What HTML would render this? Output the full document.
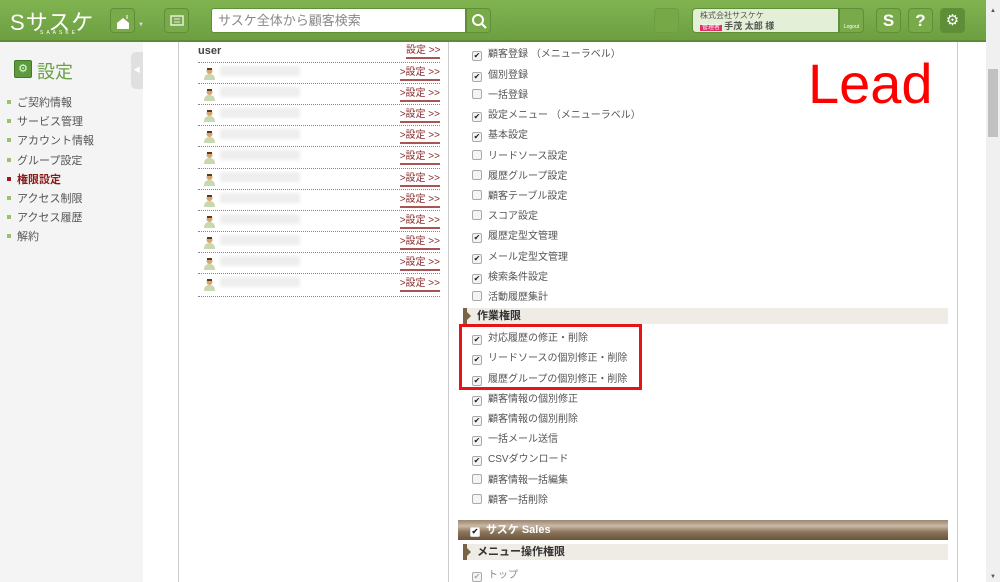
<!DOCTYPE html>
<html><head><meta charset="utf-8"><style>
*{margin:0;padding:0;box-sizing:border-box}
body{width:1000px;height:582px;overflow:hidden;background:#fff;font-family:"Liberation Sans","Noto Sans CJK JP",sans-serif;font-size:11px;color:#444;position:relative}
.hd{position:absolute;left:0;top:0;width:986px;height:42px;background:linear-gradient(#80b350,#6d9f42);border-bottom:2px solid #5e8a38}
.btn{position:absolute;top:8px;width:25px;height:25px;border:1px solid #5f9038;border-radius:4px;background:#78aa49}
.sb{position:absolute;left:0;top:42px;width:143px;height:540px;background:#f4f4f4}
.vl{position:absolute;top:42px;width:1px;height:540px;background:#ccc}
.nav{position:absolute;left:7px;font-size:11px;color:#555}
.nav:before{content:"";display:inline-block;width:4px;height:4px;background:#9bc26a;margin-right:6px;vertical-align:2px}
.nav.act{color:#8a1a1a;font-weight:bold}.nav.act:before{background:#a01818}
.row{position:absolute;left:198px;width:242px;height:21px;border-top:1px dotted #888}
.row .ic{position:absolute;left:6px;top:4px;width:11px;height:13px}
.row .nm{position:absolute;left:22px;top:3px;width:80px;height:10px;background:#eee;filter:blur(1.5px)}
.lk{position:absolute;right:0;color:#8a2a2a;font-size:10px;border-bottom:2px solid #a55;line-height:12px}
.it{position:absolute;left:472px;font-size:10px;color:#555;white-space:nowrap}
.cb{display:inline-block;width:10px;height:10px;border:1px solid #aaa;border-radius:2px;background:#f4f4f4;margin-right:6px;vertical-align:-1px;position:relative;font-size:8px;line-height:8px;text-align:center;color:#222}
.band{position:absolute;left:463px;width:485px;height:16px;background:#efebe5;font-weight:bold;font-size:11px;color:#333;padding-left:14px;line-height:16px}
.band:before{content:"";position:absolute;left:0;top:0;width:4px;height:16px;background:#7a6448}
.band:after{content:"";position:absolute;left:4px;top:4px;border-left:4px solid #7a6448;border-top:4px solid transparent;border-bottom:4px solid transparent}
</style></head><body>
<div class="hd">
 <div style="position:absolute;left:10px;top:5px;color:#fff;font-size:22px;letter-spacing:1px">S<span>サスケ</span></div>
 <div style="position:absolute;left:40px;top:30px;color:#fff;font-size:5px;letter-spacing:3px">SAASKE</div>
 <div class="btn" style="left:110px"><svg width="25" height="25"><path d="M6 14l6-5 6 5v6H6z" fill="#fff"/><path d="M16 6v4" stroke="#fff"/></svg></div>
 <div style="position:absolute;left:138px;top:22px;color:#ddd;font-size:6px">▼</div>
 <div class="btn" style="left:164px"><svg width="25" height="25"><rect x="6" y="7" width="12" height="9" fill="none" stroke="#e8f0dc" stroke-width="1.5"/><path d="M9 10h6M9 13h6" stroke="#e8f0dc"/></svg></div>
 <div style="position:absolute;left:211px;top:8px;width:255px;height:25px;background:#fff;border:1px solid #5f9038;border-radius:3px 0 0 3px;color:#888;font-size:13px;line-height:23px;padding-left:6px">サスケ全体から顧客検索</div>
 <div class="btn" style="left:466px;border-radius:0 4px 4px 0"><svg width="25" height="25"><circle cx="11" cy="11" r="5" fill="none" stroke="#fff" stroke-width="2"/><path d="M15 15l4 4" stroke="#fff" stroke-width="2"/></svg></div>
 <div class="btn" style="left:654px;background:#76a848;border-color:#6d9f42"></div>
 <div style="position:absolute;left:692px;top:8px;width:147px;height:25px;background:#e3efd6;border:1px solid #5f9038;border-radius:4px 0 0 4px;font-size:8px;color:#555;padding:1px 0 0 7px;line-height:11px">株式会社サスケケ<br><span style="background:#e0306a;color:#fff;font-size:6px;padding:0 2px">管理者</span> <b style="font-size:9px">手茂 太郎 様</b></div>
 <div class="btn" style="left:839px;border-radius:0 4px 4px 0;color:#fff;font-size:5px;text-align:center;padding-top:15px">Logout</div>
 <div class="btn" style="left:876px;color:#fff;font-size:17px;font-weight:bold;text-align:center;line-height:24px">S</div>
 <div class="btn" style="left:908px;color:#fff;font-size:17px;font-weight:bold;text-align:center;line-height:24px">?</div>
 <div class="btn" style="left:940px;background:#5f8e38;color:#fff;font-size:15px;text-align:center;line-height:24px">⚙</div>
</div>
<div style="position:absolute;left:986px;top:0;width:14px;height:582px;background:#f0f0f0"></div>
<div style="position:absolute;left:988px;top:69px;width:10px;height:68px;background:#c1c1c1"></div>
<div style="position:absolute;left:990px;top:8px;font-size:6px;color:#555">▲</div>
<div style="position:absolute;left:990px;top:574px;font-size:6px;color:#555">▼</div>
<div class="sb"></div>
<div style="position:absolute;left:131px;top:52px;width:12px;height:37px;background:#e0e0e0;border-radius:5px 0 0 5px;color:#fff;font-size:7px;line-height:37px;text-align:center">◀</div>
<div style="position:absolute;left:14px;top:60px;width:18px;height:18px;background:#5e9a3d;border:1px solid #3f7a2a;border-radius:2px;color:#dfd;font-size:11px;text-align:center;line-height:16px">⚙</div>
<div style="position:absolute;left:37px;top:58px;font-size:18px;color:#6a9f44">設定</div>
<div class="nav" style="top:94px">ご契約情報</div>
<div class="nav" style="top:113px">サービス管理</div>
<div class="nav" style="top:132px">アカウント情報</div>
<div class="nav" style="top:152px">グループ設定</div>
<div class="nav act" style="top:171px">権限設定</div>
<div class="nav" style="top:190px">アクセス制限</div>
<div class="nav" style="top:209px">アクセス履歴</div>
<div class="nav" style="top:228px">解約</div>
<div class="vl" style="left:178px"></div>
<div class="vl" style="left:448px"></div>
<div class="vl" style="left:957px"></div>
<div style="position:absolute;left:198px;top:45px;font-weight:bold;color:#444">user</div>
<div class="lk" style="left:406px;top:45px;right:auto">設定 &gt;&gt;</div>
<div id="rows"></div>
<div style="position:absolute;left:198px;top:296px;width:242px;border-top:1px dotted #888"></div>
<div style="position:absolute;left:808px;top:52px;font-size:56px;color:#ff0000;line-height:64px">Lead</div>
<div style="position:absolute;left:459px;top:324px;width:183px;height:66px;border:3px solid #e61515"></div>
<div class="band" style="top:308px">作業権限</div>
<div style="position:absolute;left:458px;top:520px;width:490px;height:20px;background:linear-gradient(#9a8570,#c9b9a6 30%,#8a745c 60%,#6a5438);color:#fff;font-weight:bold;font-size:11px;line-height:20px;padding-left:12px"><span class="cb" style="background:#fff;border-color:#ddd">✔</span>サスケ Sales</div>
<div class="band" style="top:544px">メニュー操作権限</div>
<div id="items"></div>
<script>
var r=document.getElementById('rows'),h='';
for(var i=0;i<11;i++){var t=62+i*21.1;h+='<div class="row" style="top:'+t+'px"><svg class="ic" viewBox="0 0 11 13"><circle cx="5.5" cy="4" r="3" fill="#d9a46e"/><path d="M3 1h5v2H3z" fill="#5a3a20"/><path d="M0 13q0-6 5.5-6t5.5 6z" fill="#c8d8b0"/></svg><div class="nm"></div><span class="lk" style="top:4px">&gt;設定 &gt;&gt;</span></div>';}
r.innerHTML=h;
var it=[[52,'顧客登録 （メニューラベル）',1],[73,'個別登録',1],[93,'一括登録',0],[113,'設定メニュー （メニューラベル）',1],[133,'基本設定',1],[154,'リードソース設定',0],[174,'履歴グループ設定',0],[194,'顧客テーブル設定',0],[214,'スコア設定',0],[234,'履歴定型文管理',1],[255,'メール定型文管理',1],[275,'検索条件設定',1],[295,'活動履歴集計',0],[336,'対応履歴の修正・削除',1],[356,'リードソースの個別修正・削除',1],[377,'履歴グループの個別修正・削除',1],[397,'顧客情報の個別修正',1],[417,'顧客情報の個別削除',1],[437,'一括メール送信',1],[457,'CSVダウンロード',1],[478,'顧客情報一括編集',0],[498,'顧客一括削除',0],[573,'トップ',2]];
h='';it.forEach(function(a){h+='<div class="it" style="top:'+(a[0]-7)+'px'+(a[2]==2?';color:#888':'')+'"><span class="cb"'+(a[2]==2?' style="color:#aaa"':'')+'>'+(a[2]?'✔':'')+'</span>'+a[1]+'</div>';});
document.getElementById('items').innerHTML=h;
</script>
</body></html>
